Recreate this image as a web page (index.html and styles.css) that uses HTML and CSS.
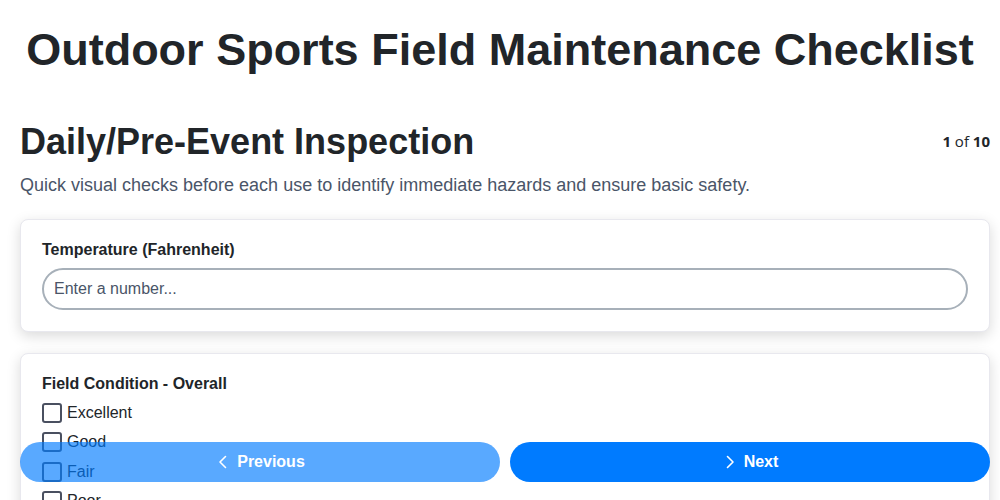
FILE: index.html
```html
<!DOCTYPE html>
<html lang="en">
<head>
    <meta charset="UTF-8">
    <meta name="viewport" content="width=device-width, initial-scale=1.0">
    <title>Outdoor Sports Field Maintenance Checklist</title>
    <link rel="stylesheet" href="styles.css">
</head>
<body>
    <header>
        <h1>Outdoor Sports Field Maintenance Checklist</h1>
    </header>

    <main>
        <div class="section-head">
            <h2>Daily/Pre-Event Inspection</h2>
            <div class="progress"><b>1</b> of <b>10</b></div>
        </div>
        <p class="description">Quick visual checks before each use to identify immediate hazards and ensure basic safety.</p>

        <div class="card">
            <label class="field-label" for="temp">Temperature (Fahrenheit)</label>
            <input class="text-input" id="temp" type="text" placeholder="Enter a number...">
        </div>

        <div class="card">
            <div class="field-label">Field Condition - Overall</div>
            <div class="options">
                <label class="option"><input type="checkbox"><span>Excellent</span></label>
                <label class="option"><input type="checkbox"><span>Good</span></label>
                <label class="option"><input type="checkbox"><span>Fair</span></label>
                <label class="option"><input type="checkbox"><span>Poor</span></label>
            </div>
        </div>
    </main>

    <nav class="pager">
        <button class="btn btn-prev" disabled>
            <svg width="16" height="16" viewBox="0 0 16 16"><path d="M10.5 2.5 5 8l5.5 5.5" fill="none" stroke="currentColor" stroke-width="1.6" stroke-linecap="round" stroke-linejoin="round"/></svg>
            Previous
        </button>
        <button class="btn btn-next">
            <svg width="16" height="16" viewBox="0 0 16 16"><path d="M5.5 2.5 11 8l-5.5 5.5" fill="none" stroke="currentColor" stroke-width="1.6" stroke-linecap="round" stroke-linejoin="round"/></svg>
            Next
        </button>
    </nav>
</body>
</html>
```

FILE: styles.css
```css
body {
    font-family: "Liberation Sans", Arial, sans-serif;
    margin: 0;
    padding: 0 20px;
    color: #212529;
    background: #fff;
}

header {
    text-align: center;
    padding: 24px 0 14px;
}

header h1 {
    margin: 0;
    font-size: 45px;
    line-height: 52px;
    font-weight: bold;
}

main {
    margin-right: -10px;
}

.section-head {
    display: flex;
    justify-content: space-between;
    align-items: flex-start;
    margin-top: 31px;
}

h2 {
    margin: 0;
    font-size: 36px;
    line-height: 42px;
    font-weight: bold;
}

.progress {
    font-family: "Open Sans", sans-serif;
    font-size: 15px;
    padding-top: 10px;
}

.description {
    margin: 10px 0 22px;
    font-size: 18px;
    line-height: 24px;
    color: #4a5568;
}

.card {
    background: #fff;
    border: 1px solid #e8e8ee;
    border-radius: 8px;
    box-shadow: 0 4px 14px rgba(0, 0, 0, 0.15);
    padding: 20px 21px 21px;
    margin-bottom: 21px;
}

.field-label {
    display: block;
    font-weight: bold;
    font-size: 16px;
    line-height: 20px;
    margin-bottom: 8px;
}

.text-input {
    display: block;
    box-sizing: border-box;
    width: 100%;
    height: 42px;
    padding: 0 10px;
    border: 2px solid #a7b0b9;
    border-radius: 21px;
    font-family: inherit;
    font-size: 16px;
    color: #212529;
    outline: none;
}

.text-input::placeholder {
    color: #4a5568;
}

.options {
    margin-top: -4px;
}

.option {
    display: flex;
    align-items: center;
    gap: 5px;
    height: 29.5px;
    font-size: 16px;
}

.option input {
    appearance: none;
    margin: 0;
    width: 20px;
    height: 20px;
    border: 2px solid #4a5060;
    border-radius: 3px;
    background: #fff;
}

.pager {
    position: fixed;
    left: 20px;
    right: 10px;
    bottom: 18px;
    display: flex;
    gap: 10px;
}

.btn {
    flex: 1;
    height: 40px;
    border: none;
    border-radius: 20px;
    background: #007bff;
    color: #fff;
    font-family: inherit;
    font-size: 16px;
    font-weight: bold;
    display: flex;
    align-items: center;
    justify-content: center;
    gap: 6px;
}

.btn:disabled {
    opacity: 0.65;
}
```
